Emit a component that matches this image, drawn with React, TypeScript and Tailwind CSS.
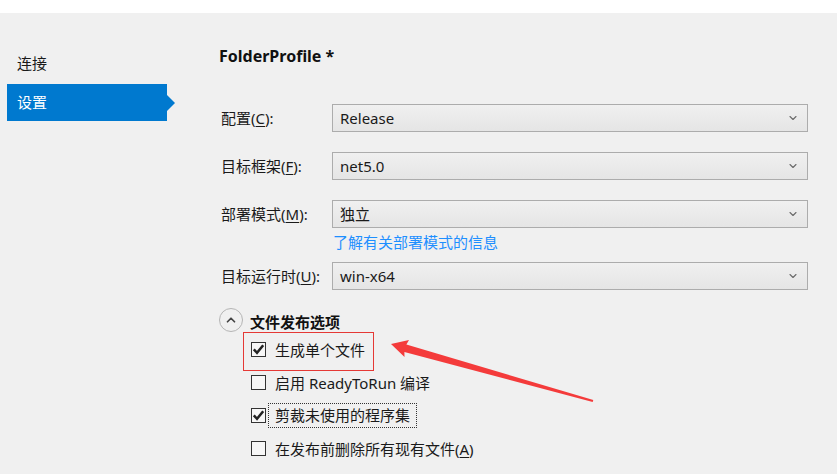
import { ChevronDown, ChevronUp } from 'lucide-react';

const font = { fontFamily: '"Noto Sans", "Noto Sans CJK SC", sans-serif' };

function Select({ value }: { value: string }) {
	return (
		<div className="flex h-[28px] w-[476px] items-center justify-between border border-[#acacac] bg-gradient-to-b from-[#f0f0f0] to-[#e5e5e5] pl-[7px] pr-[8px]">
			<span className="text-[15px] leading-none text-[#1a1a1a]">{value}</span>
			<ChevronDown size={12} strokeWidth={2.2} className="text-[#6a6a6a]" />
		</div>
	);
}

function Row({ label, hot, rest, value }: { label: string; hot: string; rest: string; value: string }) {
	return (
		<div className="flex items-center">
			<div className="w-[111px] text-[15px] leading-none text-[#1a1a1a]">
				{label}(<span className="underline underline-offset-2">{hot}</span>){rest}
			</div>
			<Select value={value} />
		</div>
	);
}

function Check({ checked, children, focus }: { checked?: boolean; children: React.ReactNode; focus?: boolean }) {
	return (
		<div className="flex h-[33px] items-center">
			<div className="flex h-[15px] w-[15px] items-center justify-center border border-[#333] bg-[#f7f7f7]">
				{checked && (
					<svg width="13" height="13" viewBox="0 0 13 13">
						<path d="M1.8 6.3 L5 9.8 L11.2 2.2" fill="none" stroke="#222" strokeWidth="2.5" />
					</svg>
				)}
			</div>
			<span
				className={
					focus
						? 'ml-[2px] border border-dotted border-[#333] px-[6px] py-[3px] text-[15px] leading-[17px] text-[#1a1a1a]'
						: 'ml-[9px] text-[15px] leading-[18px] text-[#1a1a1a]'
				}
			>
				{children}
			</span>
		</div>
	);
}

export default function App() {
	return (
		<div className="relative h-[474px] w-[837px] overflow-hidden bg-[#f0f0f0]" style={font}>
			<div className="h-[13px] bg-white" />
			<div className="flex">
				{/* nav */}
				<div className="w-[219px] pt-[43px]">
					<div className="pl-[17px] text-[15px] leading-none text-[#1a1a1a]">连接</div>
					<div className="relative ml-[7px] mt-[13px] flex h-[37px] w-[160px] items-center bg-[#0079cf] pl-[10px] text-[15px] text-white">
						设置
						<div className="absolute right-[-8px] top-[11px] h-0 w-0 border-y-[8px] border-l-[8px] border-y-transparent border-l-[#0079cf]" />
					</div>
				</div>

				{/* main */}
				<div className="pt-[33px]">
					<div className="text-[16px] font-bold leading-[20px] text-[#111]">FolderProfile *</div>
					<div className="ml-[2px] mt-[38px] flex flex-col">
						<Row label="配置" hot="C" rest=":" value="Release" />
						<div className="mt-[20px]">
							<Row label="目标框架" hot="F" rest=":" value="net5.0" />
						</div>
						<div className="mt-[20px]">
							<Row label="部署模式" hot="M" rest=":" value="独立" />
						</div>
						<div className="ml-[112px] mt-[5px] text-[15px] leading-[18px] text-[#1e8fff]">了解有关部署模式的信息</div>
						<div className="mt-[11px]">
							<Row label="目标运行时" hot="U" rest=":" value="win-x64" />
						</div>
					</div>

					<div className="mt-[18px] flex items-center">
						<div className="flex h-[24px] w-[24px] items-center justify-center rounded-full border border-[#b5b5b5]">
							<ChevronUp size={14} strokeWidth={3} className="text-[#444]" />
						</div>
						<span className="ml-[7px] mt-[4px] text-[15px] font-bold leading-none text-[#111]">文件发布选项</span>
					</div>

					<div className="ml-[32px] mt-[1px]">
						<Check checked>生成单个文件</Check>
						<Check>启用 ReadyToRun 编译</Check>
						<Check checked focus>
							剪裁未使用的程序集
						</Check>
						<Check>
							在发布前删除所有现有文件(<span className="underline underline-offset-2">A</span>)
						</Check>
					</div>
				</div>
			</div>

			{/* annotation */}
			<div className="absolute left-[243px] top-[332px] h-[39px] w-[131px] border border-[#e53935]" />
			<svg className="absolute left-0 top-0" width="837" height="474">
				<polygon
					points="391,344 409,340 406.4,344.5 593.3,400 592.7,402 404.4,352 404.5,357"
					fill="#f43b3b"
				/>
			</svg>
		</div>
	);
}
